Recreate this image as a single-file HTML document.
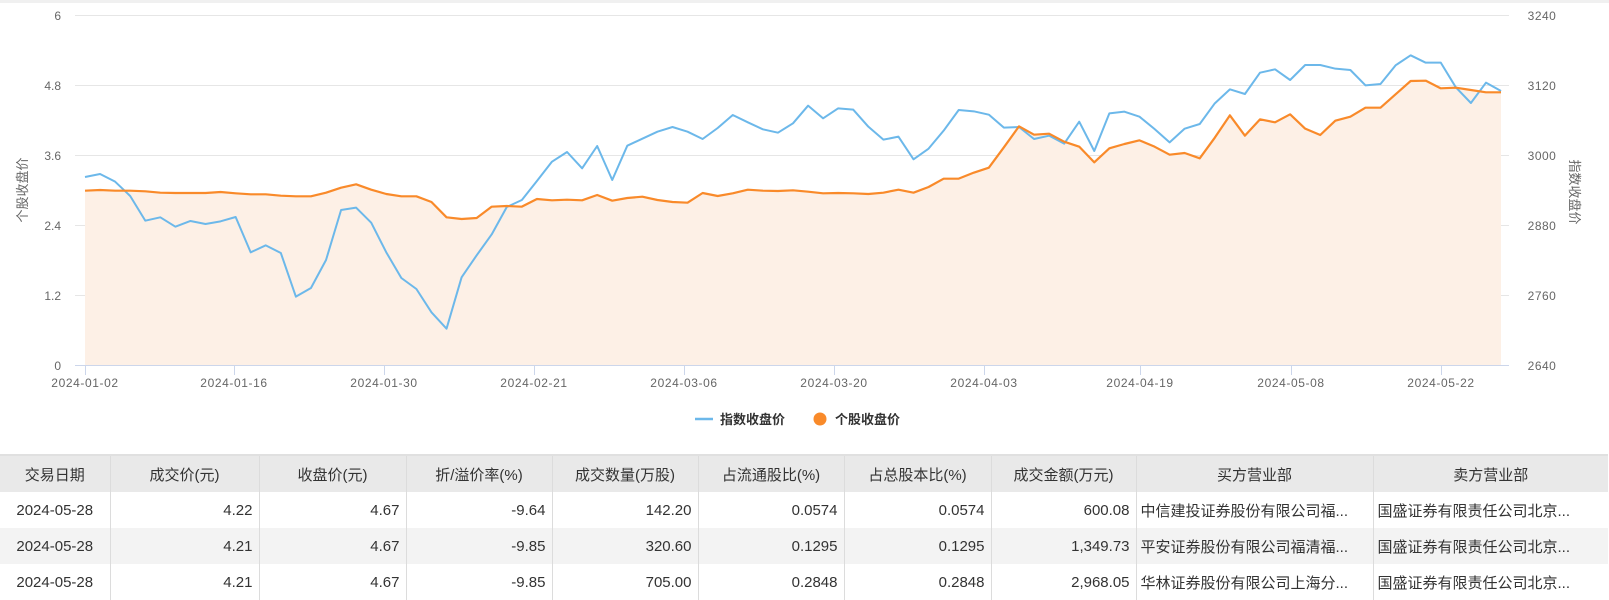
<!DOCTYPE html>
<html><head><meta charset="utf-8">
<style>
body{margin:0;width:1609px;height:597px;overflow:hidden;background:#fff;font-family:"Liberation Sans","Noto Sans CJK SC",sans-serif;position:relative}
.top{position:absolute;left:0;top:0;width:1609px;height:3px;background:#f0f0f0}
svg{position:absolute;left:0;top:0}
table{position:absolute;left:0;top:454px;width:1608px;border-collapse:collapse;table-layout:fixed;font-size:15px;color:#333}
th{background:#e9e9e9;font-weight:normal;height:36px;border-left:1px solid #dcdcdc;border-top:2px solid #e0e0e0;padding:0;text-align:center}
th:first-child,td:first-child{border-left:none}
td{height:36px;padding:0 6px;border-left:1px solid #dcdcdc;text-align:right;white-space:nowrap;overflow:hidden;text-overflow:ellipsis}
td.c{text-align:center}
td.l{text-align:left;padding-left:4px}
tr.g td{background:#f3f3f3}
</style></head><body>
<div class="top"></div>
<svg width="1609" height="454" font-family="Liberation Sans, Noto Sans CJK SC, sans-serif">
<g stroke="#e6e6e6" stroke-width="1">
<line x1="75" y1="15.5" x2="1509" y2="15.5"/>
<line x1="75" y1="85.5" x2="1509" y2="85.5"/>
<line x1="75" y1="155.5" x2="1509" y2="155.5"/>
<line x1="75" y1="225.5" x2="1509" y2="225.5"/>
<line x1="75" y1="295.5" x2="1509" y2="295.5"/>
</g>
<g transform="translate(85,0) scale(15.064,0.33333)">
<polygon fill="#fdf0e6" points="0,1095 0,572 1,570 2,572 3,572 4,574 5,578 6,579 7,579 8,579 9,576 10,580 11,583 12,583 13,587 14,589 15,589 16,578 17,563 18,553 19,569 20,582 21,589 22,589 23,606 24,652 25,657 26,654 27,620 28,618 29,620 30,597 31,601 32,599 33,601 34,585 35,602 36,594 37,590 38,600 39,606 40,608 41,579 42,588 43,580 44,569 45,572 46,573 47,571 48,575 49,580 50,579 51,580 52,582 53,578 54,569 55,578 56,561 57,536 58,536 59,518 60,503 61,442 62,379 63,404 64,401 65,425 66,440 67,487 68,445 69,432 70,421 71,440 72,464 73,459 74,475 75,413 76,346 77,407 78,358 79,367 80,343 81,386 82,405 83,362 84,350 85,323 86,323 87,283 88,243 89,242 90,265 91,263 92,270 93,277 94,277 94,1095"/>
<polyline fill="none" stroke="#6cb8ea" stroke-width="2" vector-effect="non-scaling-stroke" stroke-linejoin="round" points="0,531 1,522 2,545 3,588 4,662 5,652 6,680 7,663 8,672 9,664 10,651 11,757 12,736 13,759 14,890 15,864 16,780 17,630 18,623 19,668 20,757 21,834 22,867 23,937 24,986 25,832 26,766 27,703 28,621 29,600 30,543 31,485 32,456 33,505 34,438 35,540 36,437 37,416 38,395 39,381 40,395 41,417 42,384 43,345 44,367 45,388 46,398 47,370 48,317 49,355 50,325 51,329 52,380 53,419 54,410 55,478 56,446 57,392 58,330 59,334 60,344 61,383 62,381 63,417 64,407 65,431 66,365 67,453 68,340 69,335 70,350 71,387 72,427 73,386 74,372 75,310 76,268 77,282 78,218 79,208 80,240 81,195 82,195 83,206 84,210 85,256 86,252 87,196 88,166 89,188 90,188 91,262 92,309 93,248 94,273"/>
<polyline fill="none" stroke="#f98a2a" stroke-width="2.2" vector-effect="non-scaling-stroke" stroke-linejoin="round" points="0,572 1,570 2,572 3,572 4,574 5,578 6,579 7,579 8,579 9,576 10,580 11,583 12,583 13,587 14,589 15,589 16,578 17,563 18,553 19,569 20,582 21,589 22,589 23,606 24,652 25,657 26,654 27,620 28,618 29,620 30,597 31,601 32,599 33,601 34,585 35,602 36,594 37,590 38,600 39,606 40,608 41,579 42,588 43,580 44,569 45,572 46,573 47,571 48,575 49,580 50,579 51,580 52,582 53,578 54,569 55,578 56,561 57,536 58,536 59,518 60,503 61,442 62,379 63,404 64,401 65,425 66,440 67,487 68,445 69,432 70,421 71,440 72,464 73,459 74,475 75,413 76,346 77,407 78,358 79,367 80,343 81,386 82,405 83,362 84,350 85,323 86,323 87,283 88,243 89,242 90,265 91,263 92,270 93,277 94,277"/>
</g>
<line x1="75" y1="365.5" x2="1509" y2="365.5" stroke="#ccd6eb" stroke-width="1"/>
<g stroke="#ccd6eb" stroke-width="1">
<line x1="85.5" y1="365" x2="85.5" y2="375"/><line x1="234.5" y1="365" x2="234.5" y2="375"/><line x1="384.5" y1="365" x2="384.5" y2="375"/><line x1="534.5" y1="365" x2="534.5" y2="375"/><line x1="684.5" y1="365" x2="684.5" y2="375"/><line x1="834.5" y1="365" x2="834.5" y2="375"/><line x1="984.5" y1="365" x2="984.5" y2="375"/><line x1="1140.5" y1="365" x2="1140.5" y2="375"/><line x1="1291.5" y1="365" x2="1291.5" y2="375"/><line x1="1441.5" y1="365" x2="1441.5" y2="375"/>
</g>
<g fill="#666" font-size="12" text-anchor="middle" letter-spacing="0.6">
<text x="85" y="387">2024-01-02</text><text x="234" y="387">2024-01-16</text><text x="384" y="387">2024-01-30</text><text x="534" y="387">2024-02-21</text><text x="684" y="387">2024-03-06</text><text x="834" y="387">2024-03-20</text><text x="984" y="387">2024-04-03</text><text x="1140" y="387">2024-04-19</text><text x="1291" y="387">2024-05-08</text><text x="1441" y="387">2024-05-22</text>
</g>
<g fill="#666" font-size="12" text-anchor="end">
<text x="61" y="20">6</text><text x="61" y="90">4.8</text><text x="61" y="160">3.6</text><text x="61" y="230">2.4</text><text x="61" y="300">1.2</text><text x="61" y="370">0</text>
</g>
<g fill="#666" font-size="12" text-anchor="middle" letter-spacing="0.5">
<text x="1542" y="20">3240</text><text x="1542" y="90">3120</text><text x="1542" y="160">3000</text><text x="1542" y="230">2880</text><text x="1542" y="300">2760</text><text x="1542" y="370">2640</text>
</g>
<text transform="translate(27,190) rotate(-90)" fill="#666" font-size="13" text-anchor="middle">个股收盘价</text>
<text transform="translate(1570,192) rotate(90)" fill="#666" font-size="13" text-anchor="middle">指数收盘价</text>
<line x1="695" y1="419" x2="713" y2="419" stroke="#6cb8ea" stroke-width="2.5"/>
<text x="720" y="424" fill="#333" font-size="13" font-weight="bold">指数收盘价</text>
<circle cx="820" cy="419" r="6.5" fill="#f98a2a"/>
<text x="835" y="424" fill="#333" font-size="13" font-weight="bold">个股收盘价</text>
</svg>
<table>
<colgroup><col style="width:110px"><col style="width:149px"><col style="width:147px"><col style="width:146px"><col style="width:146px"><col style="width:146px"><col style="width:147px"><col style="width:145px"><col style="width:237px"><col style="width:235px"></colgroup>
<tr><th>交易日期</th><th>成交价(元)</th><th>收盘价(元)</th><th>折/溢价率(%)</th><th>成交数量(万股)</th><th>占流通股比(%)</th><th>占总股本比(%)</th><th>成交金额(万元)</th><th>买方营业部</th><th>卖方营业部</th></tr>
<tr><td class="c">2024-05-28</td><td>4.22</td><td>4.67</td><td>-9.64</td><td>142.20</td><td>0.0574</td><td>0.0574</td><td>600.08</td><td class="l">中信建投证券股份有限公司福...</td><td class="l">国盛证券有限责任公司北京...</td></tr>
<tr class="g"><td class="c">2024-05-28</td><td>4.21</td><td>4.67</td><td>-9.85</td><td>320.60</td><td>0.1295</td><td>0.1295</td><td>1,349.73</td><td class="l">平安证券股份有限公司福清福...</td><td class="l">国盛证券有限责任公司北京...</td></tr>
<tr><td class="c">2024-05-28</td><td>4.21</td><td>4.67</td><td>-9.85</td><td>705.00</td><td>0.2848</td><td>0.2848</td><td>2,968.05</td><td class="l">华林证券股份有限公司上海分...</td><td class="l">国盛证券有限责任公司北京...</td></tr>
</table>
</body></html>
